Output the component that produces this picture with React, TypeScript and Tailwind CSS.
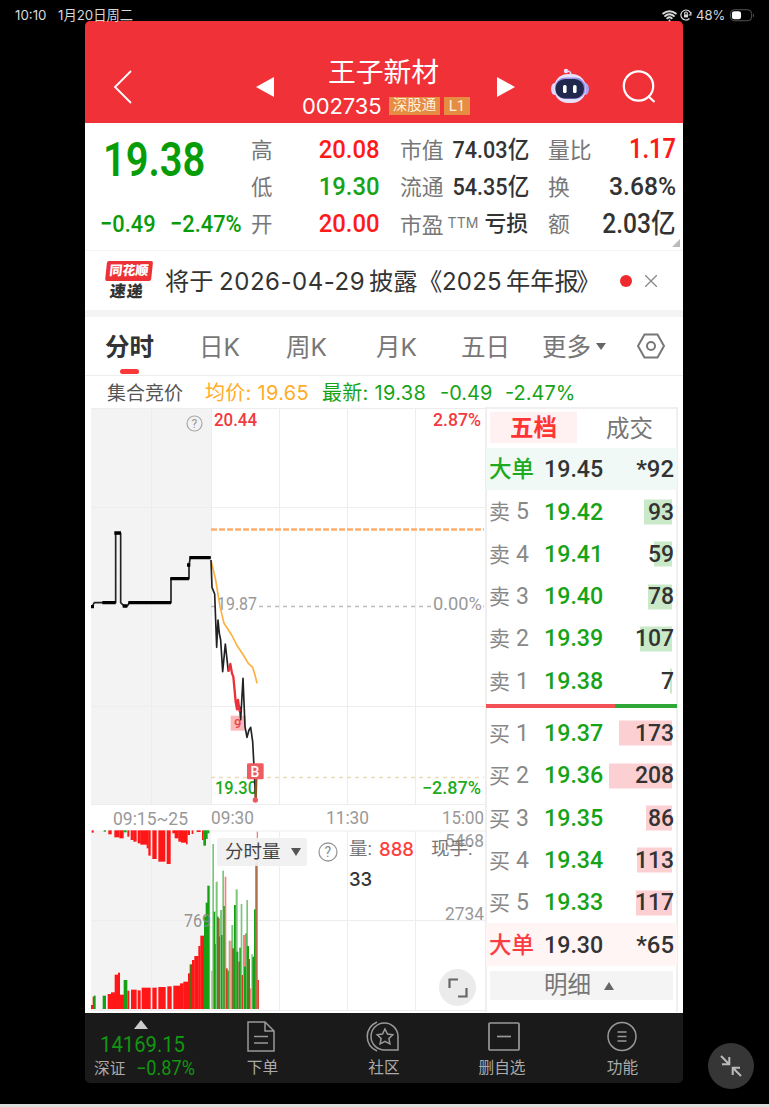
import { Wifi } from "lucide-react";

const stats = [
  { label: "高", value: "20.08", color: "text-[#ff1a1a]" },
  { label: "低", value: "19.30", color: "text-[#17a317]" },
  { label: "开", value: "20.00", color: "text-[#ff1a1a]" },
];

const asks = [
  { label: "5", price: "19.42", volume: "93", bar: 28 },
  { label: "4", price: "19.41", volume: "59", bar: 18 },
  { label: "3", price: "19.40", volume: "78", bar: 24 },
  { label: "2", price: "19.39", volume: "107", bar: 32 },
  { label: "1", price: "19.38", volume: "7", bar: 2 },
];

const bids = [
  { label: "1", price: "19.37", volume: "173", bar: 53 },
  { label: "2", price: "19.36", volume: "208", bar: 63 },
  { label: "3", price: "19.35", volume: "86", bar: 26 },
  { label: "4", price: "19.34", volume: "113", bar: 35 },
  { label: "5", price: "19.33", volume: "117", bar: 36 },
];

const RED = "#ff1717";
const GREEN = "#16a016";
const LIGHT_GREEN = "#7cc67c";
const LIGHT_RED = "#f98080";
const BROWN = "#8a6a30";

type Bar = [number, number, number, string];

// x start, x end, height edge, color (thirds of a pixel)
const auctionBars: Bar[] = [
  [18, 25, 555, RED], [23, 27, 530, RED], [26, 32, 527, GREEN], [53, 63, 527, GREEN],
  [68, 79, 522, RED], [78, 91, 517, RED], [89, 99, 464, RED], [99, 105, 458, RED],
  [104, 117, 524, RED], [116, 127, 480, GREEN], [127, 133, 512, RED], [138, 155, 509, RED],
  [158, 167, 511, RED], [170, 197, 503, RED], [202, 215, 503, RED], [220, 242, 501, RED],
  [247, 260, 499, RED], [265, 286, 497, RED], [285, 296, 490, RED], [295, 311, 485, RED],
  [309, 316, 460, RED], [314, 322, 433, "#5c6a10"], [321, 329, 420, RED], [328, 341, 408, RED],
  [340, 347, 378, RED], [346, 359, 347, RED], [357, 363, 290, GREEN], [362, 369, 248, GREEN],
  [367, 374, 197, GREEN],
];

const auctionTopBars: Bar[] = [
  [20, 26, 38, RED], [56, 63, 35, GREEN], [70, 80, 43, RED], [88, 103, 52, RED],
  [103, 116, 55, RED], [116, 125, 37, GREEN], [127, 133, 50, RED], [137, 146, 60, RED],
  [145, 155, 65, RED], [158, 167, 70, RED], [166, 186, 74, RED], [185, 191, 85, RED],
  [190, 197, 107, RED], [202, 215, 117, RED], [220, 241, 125, RED], [245, 257, 132, RED],
  [262, 270, 40, RED], [269, 281, 55, RED], [280, 289, 65, RED], [288, 304, 68, RED],
  [303, 308, 73, RED], [308, 315, 45, RED], [320, 325, 42, RED], [335, 347, 36, RED],
  [351, 356, 60, RED], [355, 363, 77, GREEN], [362, 368, 57, GREEN], [367, 373, 40, GREEN],
];

const volumeBars: Bar[] = [
  [379, 383, 452, LIGHT_RED], [382, 387, 72, LIGHT_GREEN], [386, 391, 275, GREEN],
  [389, 394, 372, GREEN], [392, 398, 185, LIGHT_GREEN], [396, 401, 290, GREEN],
  [399, 404, 295, BROWN], [402, 408, 350, GREEN], [405, 411, 270, LIGHT_GREEN],
  [408, 414, 345, GREEN], [412, 417, 152, LIGHT_GREEN], [415, 420, 258, GREEN],
  [419, 424, 170, LIGHT_RED], [423, 428, 445, "#d33b25"], [427, 432, 452, GREEN],
  [431, 436, 362, LIGHT_GREEN], [436, 441, 362, LIGHT_RED], [439, 445, 315, LIGHT_GREEN],
  [441, 449, 385, BROWN], [447, 453, 255, GREEN], [452, 458, 208, LIGHT_GREEN],
  [454, 460, 395, GREEN], [460, 465, 425, BROWN], [463, 468, 383, GREEN],
  [467, 472, 252, LIGHT_GREEN], [470, 475, 465, "#d33b25"], [474, 480, 345, LIGHT_RED],
  [477, 483, 440, GREEN], [481, 486, 340, GREEN], [484, 489, 240, LIGHT_GREEN],
  [486, 492, 378, GREEN], [491, 495, 417, "#d33b25"], [495, 499, 505, LIGHT_RED],
  [499, 503, 402, LIGHT_GREEN], [502, 508, 410, GREEN], [507, 512, 268, GREEN],
  [511, 517, 130, BROWN], [515, 519, 35, LIGHT_RED], [517, 522, 480, "#ee3a35"],
];

function Bars({ data }: { data: Bar[] }) {
  return (
    <>
      {data.map(([x1, x2, top, color], i) => (
        <rect key={i} x={x1} y={top} width={x2 - x1} height={567 - top} fill={color} />
      ))}
    </>
  );
}

function StatusBar() {
  return (
    <div className="flex h-[21px] justify-between pt-[5px] pr-[14px] pl-[15px] font-[Inter,'Noto_Sans_CJK_SC',sans-serif] text-[#d8d8d8]">
      <div className="flex h-5 items-center gap-[10px] text-[13.3px] leading-5 whitespace-nowrap">
        <span className="w-[33px]">10:10</span>
        <span>1月20日周二</span>
      </div>
      <div className="flex h-5 items-center text-[13px]">
        <Wifi className="h-[15px] w-[15px]" strokeWidth={3.2} />
        <svg className="ml-[3px] h-3 w-3" viewBox="0 0 12 12" fill="none" stroke="currentColor" strokeWidth="1.2">
          <path d="M9.5 9.5A5 5 0 1 1 10.8 5M10.9 3v3H8.6" />
          <path d="M4.7 5.5V4.3a1.3 1.3 0 0 1 2.6 0v1.2" />
          <rect x="4" y="5.4" width="4" height="3" fill="currentColor" stroke="none" />
        </svg>
        <span className="ml-1 w-[29px] pt-[1px]">48%</span>
        <svg className="ml-[5px] h-[13px] w-[25px]" viewBox="0 0 26 13">
          <rect x="0.5" y="0.5" width="22" height="11.5" rx="4" fill="none" stroke="#555" />
          <rect x="2" y="2" width="9.5" height="8.5" rx="2.5" fill="#fff" />
          <path d="M24 4.5a2.2 2.2 0 0 1 0 3.8z" fill="#555" />
        </svg>
      </div>
    </div>
  );
}

function Robot() {
  return (
    <svg className="h-9 w-10" viewBox="0 0 40 36">
      <circle cx="16" cy="3" r="2.2" fill="#e8dfff" />
      <path d="M17 3q4 0 4 4" stroke="#d9ccf6" strokeWidth="1.6" fill="none" />
      <ellipse cx="4.5" cy="21" rx="3.5" ry="6" fill="#dcd4fa" />
      <ellipse cx="35.5" cy="21" rx="3.5" ry="6" fill="#aaa3ec" />
      <rect x="4" y="6" width="32" height="29" rx="14" fill="#e6e0fb" />
      <rect x="5" y="9.5" width="30.5" height="21.5" rx="10" fill="#9c8ee5" />
      <rect x="5.5" y="11" width="28.5" height="19.5" rx="9.5" fill="#20294b" />
      <rect x="13" y="17" width="3.6" height="8" rx="1.6" fill="#fff" />
      <rect x="23" y="17" width="3.6" height="8" rx="1.6" fill="#fff" />
    </svg>
  );
}

function Header() {
  return (
    <header className="flex h-[102px] rounded-t-[5px] bg-[#f03138] pt-[34px] text-white">
      <svg className="mt-[14px] ml-[28px] h-9 w-5" viewBox="0 0 20 36" fill="none" stroke="#fff" strokeWidth="1.8">
        <path d="M18 2 2 18l16 16" />
      </svg>
      <svg className="mt-[22px] ml-[123px] h-5 w-[18px]" viewBox="0 0 18 20">
        <path d="M0 10 18 0v20z" fill="#fff" />
      </svg>
      <div className="ml-[24px] flex w-[171px] flex-col items-center">
        <div className="h-[34px] text-[27.8px] leading-[35px]">王子新材</div>
        <div className="ml-[4px] flex h-[33px] items-center gap-[7px] self-start">
          <span className="w-[80px] font-[Inter] text-[22px] leading-none tracking-[-0.1px]">002735</span>
          <div className="flex gap-1 text-[15px] leading-[18px] text-[#fff0dc]">
            <span className="h-[18px] w-[51px] bg-[#e58d43] text-center text-[14.5px] whitespace-nowrap">深股通</span>
            <span className="h-[18px] w-[26px] bg-[#e58d43] text-center">L1</span>
          </div>
        </div>
      </div>
      <svg className="mt-[22px] ml-[28px] h-5 w-[18px]" viewBox="0 0 18 20">
        <path d="M18 10 0 0v20z" fill="#fff" />
      </svg>
      <div className="mt-[13px] ml-[35px]">
        <Robot />
      </div>
      <svg className="mt-[15px] ml-[32px] h-[34px] w-[34px]" viewBox="0 0 34 34" fill="none" stroke="#fff" strokeWidth="2.2">
        <circle cx="16.5" cy="16" r="14.7" />
        <path d="m26 26 6.5 6" />
      </svg>
    </header>
  );
}

function Quote() {
  return (
    <section className="relative flex h-[128px] border-b border-[#f4f4f4] pt-2 whitespace-nowrap">
      <div className="ml-[15px] w-[151px] text-[#089c08]">
        <div className="mt-[4px] ml-[3px] h-[50px] origin-left scale-x-[.83] text-[48px] leading-[50px] font-semibold">19.38</div>
        <div className="mt-[20px] flex h-[37px] w-[161px] origin-left scale-x-[.88] justify-between text-[24.8px] leading-[37px] font-medium">
          <span>−0.49</span>
          <span>−2.47%</span>
        </div>
      </div>
      <div className="w-[129px]">
        {stats.map((s) => (
          <div key={s.label} className="flex h-[37px] items-center justify-between">
            <span className="pt-[4px] text-[21.5px] text-[#777]">{s.label}</span>
            <span className={"origin-right scale-x-[.9] text-[26.5px] leading-none font-medium " + s.color}>{s.value}</span>
          </div>
        ))}
      </div>
      <div className="ml-5 w-[128px] text-[21.8px] text-[#777]">
        <div className="flex h-[37px] items-center justify-between">
          <span className="pt-[4px]">市值</span>
          <span className="origin-right scale-x-[.9] text-[24px] font-medium text-[#333]">74.03亿</span>
        </div>
        <div className="flex h-[37px] items-center justify-between">
          <span className="pt-[4px]">流通</span>
          <span className="origin-right scale-x-[.9] text-[24px] font-medium text-[#333]">54.35亿</span>
        </div>
        <div className="flex h-[37px] items-center justify-between">
          <span className="flex items-start pt-[4px] leading-8">
            市盈<span className="ml-1 font-[Inter] text-[14px] leading-[26px]">TTM</span>
          </span>
          <span className="pt-[2px] font-medium text-[#333]">亏损</span>
        </div>
      </div>
      <div className="ml-5 w-[128px] text-[21.8px] text-[#777]">
        <div className="flex h-[37px] items-center justify-between">
          <span className="pt-[4px]">量比</span>
          <span className="origin-right scale-x-[.87] text-[27px] leading-none font-semibold text-[#ff1a1a]">1.17</span>
        </div>
        <div className="flex h-[37px] items-center justify-between">
          <span className="pt-[4px]">换</span>
          <span className="origin-right scale-x-[.93] text-[26.5px] leading-none font-medium text-[#333]">3.68%</span>
        </div>
        <div className="flex h-[37px] items-center justify-between">
          <span className="pt-[4px]">额</span>
          <span className="origin-right scale-x-[.91] pt-[2px] text-[27px] leading-none font-medium text-[#333]">2.03亿</span>
        </div>
      </div>
      <svg className="absolute right-[3px] bottom-[3px] h-2 w-2" viewBox="0 0 8 8">
        <path d="M8 0v8H0z" fill="#bbb" />
      </svg>
    </section>
  );
}

function Notice() {
  return (
    <section className="flex h-[60px] items-center border-b border-[#f4f4f4] text-[#333]">
      <div className="mt-[1px] ml-[20px] w-[46px] -skew-x-6 text-center font-black">
        <div className="h-[20px] rounded-[2px] bg-[#ee3037] text-[13px] leading-[19px] text-white">同花顺</div>
        <div className="h-[20px] text-[16px] leading-[21px] tracking-[1px]">速递</div>
      </div>
      <div className="mt-[3px] ml-[14px] flex w-[441px] items-center text-[24.3px] leading-9 whitespace-nowrap">
        <span className="w-[49px]">将于</span>
        <span className="ml-[5px] w-[147px] font-[Inter] text-[24px] tracking-[0.55px]">2026-04-29</span>
        <span className="ml-[3px] w-[49px]">披露</span>
        <span className="w-[24px]">《</span>
        <span className="w-[61px] font-[Inter] text-[24px] tracking-[0.2px]">2025</span>
        <span className="ml-[3px]">年年报</span>
        <span className="-ml-[3px]">》</span>
      </div>
      <span className="ml-[14px] h-3 w-3 rounded-full bg-[#ee2a2e]" />
      <svg className="ml-[13px] h-3 w-3" viewBox="0 0 12 12" stroke="#888" strokeWidth="1.3">
        <path d="m0 0 12 12M12 0 0 12" />
      </svg>
    </section>
  );
}

function Tabs() {
  return (
    <nav className="flex h-[59px] items-center border-b border-[#eee] font-[Inter,'Noto_Sans_CJK_SC',sans-serif] text-[24.5px] leading-[58px] whitespace-nowrap text-[#777]">
      <div className="relative ml-[20px] h-[58px] w-[50px] pt-[1px] font-bold text-[#333]">
        分时
        <span className="absolute bottom-[1px] left-[15px] h-[5px] w-[19px] rounded-full bg-[#fa3838]" />
      </div>
      <span className="ml-[44px] w-[43px] pt-[2px]">日K</span>
      <span className="ml-[44px] w-[43px] pt-[2px]">周K</span>
      <span className="ml-[47px] w-[43px] pt-[2px]">月K</span>
      <span className="ml-[42px] w-[49px] pt-[2px]">五日</span>
      <span className="ml-[32px] w-[50px] pt-[2px]">更多</span>
      <svg className="ml-[4px] h-[7px] w-[10px]" viewBox="0 0 10 7">
        <path d="M0 0h10L5 7z" fill="#666" />
      </svg>
      <svg className="ml-[31px] h-[26px] w-[28px]" viewBox="0 0 28 26" fill="none" stroke="#777" strokeWidth="2">
        <path d="M7.5 1.5h13L27 13l-6.5 11.5h-13L1 13z" />
        <circle cx="14" cy="13" r="4" />
      </svg>
    </nav>
  );
}

function Summary() {
  return (
    <div className="flex h-[31px] items-center pt-[3px] font-[Inter,'Noto_Sans_CJK_SC',sans-serif] text-[20px] leading-[28px] whitespace-nowrap text-[#17a317]">
      <span className="ml-[22px] w-[78px] pt-[1px] text-[19px] text-[#555]">集合竞价</span>
      <span className="ml-[20px] w-[106px] tracking-[0.3px] text-[#ffac27]">均价: 19.65</span>
      <span className="ml-[11px] w-[106px] tracking-[0.3px]">最新: 19.38</span>
      <span className="ml-[12px] w-[53px]">-0.49</span>
      <span className="ml-[12px]">-2.47%</span>
    </div>
  );
}

function Chart() {
  return (
    <div className="relative h-[605px] w-[400px]">
      <svg className="block h-[605px] w-[400px] overflow-visible" viewBox="85 407 400 605" fontFamily="Roboto, 'Noto Sans CJK SC', sans-serif">
        <path d="M91 408h120v396H91zM91 831h120v179H91z" fill="#f3f3f3" />
        <path
          d="M91 408.5h394M91 507.5h394M91 706.5h394M91 804.5h394M91 831h394M91 920.5h394M91 1010.5h394M151.5 408v396M279.5 408v396M347.5 408v396M415.5 408v396M211.5 408v396M151.5 831v179M279.5 831v179M347.5 831v179M415.5 831v179"
          stroke="#ededed"
          fill="none"
        />
        <path d="M211 529.5h273" stroke="#ffae70" strokeWidth="2.5" strokeDasharray="6 2" />
        <path d="M211 606.5h273" stroke="#bbb" strokeWidth="1.4" strokeDasharray="4 4" />
        <path d="M211 777.5h273" stroke="#eedcb8" strokeWidth="1.4" strokeDasharray="4 4" />
        <rect x="218" y="596" width="39" height="14" fill="#fff" />
        <rect x="433" y="600" width="48" height="10" fill="#fff" />

        <g fontSize="18" fontWeight="500">
          <text x="214" y="426" textLength="43" lengthAdjust="spacingAndGlyphs" fill="#f23a40">20.44</text>
          <text x="433" y="426" textLength="48" lengthAdjust="spacingAndGlyphs" fill="#f23a40">2.87%</text>
          <text x="217" y="609.5" textLength="40" lengthAdjust="spacingAndGlyphs" fill="#999" fontWeight="400">19.87</text>
          <text x="433" y="609.5" textLength="49" lengthAdjust="spacingAndGlyphs" fill="#999" fontWeight="400">0.00%</text>
          <text x="215" y="793.5" textLength="42" lengthAdjust="spacingAndGlyphs" fill="#1daa1d">19.30</text>
          <text x="422" y="793.5" textLength="59" lengthAdjust="spacingAndGlyphs" fill="#1daa1d">−2.87%</text>
        </g>
        <g fontSize="18.5" fill="#999">
          <text x="113" y="825" textLength="75" lengthAdjust="spacingAndGlyphs">09:15~25</text>
          <text x="211" y="824" textLength="43" lengthAdjust="spacingAndGlyphs">09:30</text>
          <text x="326" y="824" textLength="43" lengthAdjust="spacingAndGlyphs">11:30</text>
          <text x="442" y="824" textLength="42" lengthAdjust="spacingAndGlyphs">15:00</text>
          <text x="445" y="846.5" textLength="39" lengthAdjust="spacingAndGlyphs">5468</text>
          <text x="445" y="919.5" textLength="39" lengthAdjust="spacingAndGlyphs">2734</text>
        </g>

        <circle cx="194.5" cy="423.5" r="7.5" fill="none" stroke="#aaa" strokeWidth="1.2" />
        <text x="191.5" y="428" fontSize="12" fill="#999">?</text>

        {/* price line */}
        <g transform="translate(85 500) scale(0.33333)" fill="none" strokeLinejoin="round">
          <path d="M20 322l8-14h64V100h15v208l10 10h10l6-10h125v-72h54v-41l4-22h61" stroke="#222" strokeWidth="5" />
          <path d="M18 320h9M52 308h40M88 99h20M113 318h14M130 308h128M256 236h56M306 195h10M313 173h64" stroke="#000" strokeWidth="10" />
          <path d="M379 185l13 55 13 80 12 50 23 35 15 30 20 30 15 25 13 12 7 23 6 25" stroke="#fcb040" strokeWidth="5" />
          <path d="M378 180l3 82 8 20 6 160 4-82 4 40 4 20 6 95 8-83 9 83" stroke="#222" strokeWidth="5" />
          <rect x="437" y="647" width="45" height="45" fill="#f99b9b" opacity="0.7" stroke="none" />
          <path d="M464 620l3 40 7-125 6 145 6 32 6-22 5-8 6 43 4 75 5 100" stroke="#222" strokeWidth="5" />
          <path d="M430 515l6-23 5 28 4 10 7 75 4 23 3-28 5 35" stroke="#ea3038" strokeWidth="7" />
          <path d="M514 835l-2 62" stroke="#8c5620" strokeWidth="7" />
          <rect x="486" y="790" width="50" height="48" rx="4" fill="#ee5c61" />
          <circle cx="511" cy="900" r="8" fill="#f0575c" />
        </g>
        <text x="250.5" y="777" fontSize="14" fontWeight="500" fill="#fff">B</text>
        <text x="234" y="728" fontSize="13" fontWeight="500" fill="#ea4248">9</text>

        {/* volume */}
        <g transform="translate(85 820) scale(0.33333)">
          <Bars data={auctionBars} />
          <Bars data={volumeBars} />
          {auctionTopBars.map(([x1, x2, bottom, color], i) => (
            <rect key={i} x={x1} y={31} width={x2 - x1} height={bottom - 31} fill={color} />
          ))}
        </g>
        <text x="184" y="927" fontSize="17.5" fill="#888" fillOpacity="0.9" textLength="27" lengthAdjust="spacingAndGlyphs">769</text>
      </svg>

      <div className="absolute top-[431px] left-[132px] flex items-start text-[18.5px] leading-[28px] whitespace-nowrap text-[#777]">
        <div className="flex h-[28px] w-[90px] items-center rounded-[2px] bg-[#f0f0f0]/90 pl-[8px] text-[#444]">
          <span className="w-[57px]">分时量</span>
          <svg className="ml-[9px] h-[8px] w-[10px]" viewBox="0 0 10 8">
            <path d="M0 0h10L5 8z" fill="#555" />
          </svg>
        </div>
        <svg className="mt-[4px] ml-[11px] h-5 w-5" viewBox="0 0 20 20">
          <circle cx="10" cy="10" r="9" fill="none" stroke="#999" strokeWidth="1.3" />
          <text x="6.5" y="15" fontSize="14" fill="#888">?</text>
        </svg>
        <div className="-mt-[3px] ml-[11px] flex flex-col">
          <div className="flex h-[28px]">
            <span>量:</span>
            <span className="ml-[7px] w-[35px] font-[Inter] text-[18.5px] font-medium text-[#ff3f3f]">888</span>
            <span className="ml-[17px]">现手:</span>
          </div>
          <span className="mt-[2px] font-[Inter] text-[18.5px] font-medium text-[#333]">33</span>
        </div>
      </div>
      <div className="absolute top-[562px] left-[354px] flex h-[37px] w-[37px] items-center justify-center rounded-full bg-[#ebebeb]">
        <svg className="h-[20px] w-[20px]" viewBox="0 0 20 20" fill="none" stroke="#666" strokeWidth="2.2">
          <path d="M1.5 10V1.5H10M18.5 10v8.5H10" />
        </svg>
      </div>
    </div>
  );
}

function BookRow({ side, row }: { side: string; row: (typeof asks)[number] }) {
  return (
    <div className="flex h-[42.3px] items-center pt-[1px] pr-[3px] pl-[3px]">
      <span className="pt-[2px] text-[21px] text-[#888]">{side}</span>
      <span className="ml-[6px] w-[28px] text-[23px] text-[#888]">{row.label}</span>
      <span className="w-[61px] origin-left scale-x-[.94] text-[24.7px] font-medium text-[#17a317]">{row.price}</span>
      <div className="relative flex flex-1 justify-end">
        <span
          className={"absolute top-1/2 right-[2px] h-[25px] -translate-y-1/2 " + (side === "卖" ? "bg-[#c9e9c9]" : "bg-[#fcd0d2]")}
          style={{ width: row.bar }}
        />
        <span className="relative origin-right scale-x-[.93] text-[24.7px] font-medium text-[#333]">{row.volume}</span>
      </div>
    </div>
  );
}

function BigOrder({ price, volume, tone }: { price: string; volume: string; tone: string }) {
  return (
    <div className={"flex h-[42.3px] items-center pt-[1px] pr-[3px] pl-[3px] font-medium " + tone}>
      <span className="w-[55px] text-[22.5px]">大单</span>
      <span className="w-[61px] origin-left scale-x-[.94] text-[24.7px] text-[#333]">{price}</span>
      <span className="flex-1 origin-right scale-x-[.97] text-right text-[24.7px] text-[#333]">{volume}</span>
    </div>
  );
}

function OrderBook() {
  return (
    <div className="relative h-[605px] w-[193px] border-x-2 border-t-2 border-[#efefef] leading-none">
      <div className="flex h-[39px] items-start pt-[3px] text-[23.5px]">
        <div className="ml-[3px] flex h-[31px] w-[87px] items-center justify-center bg-[#fff1f1] pt-[3px] font-bold text-[#ff3535]">五档</div>
        <div className="ml-[29px] flex h-[31px] items-center pt-[4px] text-[#777]">成交</div>
      </div>
      <div className="-mr-[1px] -ml-[1px]">
        <BigOrder price="19.45" volume="*92" tone="bg-[#f0f9f5] text-[#1daa1d]" />
        {asks.map((row) => (
          <BookRow key={row.label} side="卖" row={row} />
        ))}
        <div className="mt-[2px] mb-[4px] flex h-[4px]">
          <span className="w-[129px] bg-[#f25255]" />
          <span className="flex-1 bg-[#2fa837]" />
        </div>
        {bids.map((row) => (
          <BookRow key={row.label} side="买" row={row} />
        ))}
        <BigOrder price="19.30" volume="*65" tone="bg-[#fff5f5] text-[#fa3d42]" />
      </div>
      <div className="mx-[3px] mt-[5px] flex h-[29px] items-center bg-[#f4f4f4] pt-[1px] pl-[54px] text-[23.5px] text-[#777]">
        明细
        <svg className="ml-[13px] h-[8px] w-[10px]" viewBox="0 0 10 8">
          <path d="M0 8h10L5 0z" fill="#666" />
        </svg>
      </div>
    </div>
  );
}

function BottomBar() {
  return (
    <footer className="flex h-[70px] rounded-b-[5px] bg-[#1a1a1a] text-[15.7px] leading-5 whitespace-nowrap text-[#aaa]">
      <div className="flex w-[117px] flex-col items-start">
        <svg className="mt-[7px] ml-[49px] h-[9px] w-[14px]" viewBox="0 0 14 9">
          <path d="M0 9h14L7 0z" fill="#ccc" />
        </svg>
        <div className="mt-[3px] ml-[15px] h-[24px] w-[87px] origin-left scale-x-[.9] text-[22.5px] leading-[24px] text-[#129512]">14169.15</div>
        <div className="mt-[2px] flex h-[22px] items-center">
          <span className="ml-[9px]">深证</span>
          <span className="ml-[11px] origin-left scale-x-[.94] text-[19.3px] text-[#129512]">−0.87%</span>
        </div>
      </div>
      <div className="flex w-[120px] flex-col items-center pt-[8px]">
        <svg className="mr-[2px] h-[31px] w-[30px]" viewBox="0 0 30 31" fill="none" stroke="#999" strokeWidth="1.5">
          <path d="M2 1h17l9 9v20H2zM19 1v9h9M8 15.5h14M8 22h14" />
        </svg>
        <span className="mt-[6px] ml-[1px]">下单</span>
      </div>
      <div className="flex w-[124px] flex-col items-center pt-[8px]">
        <svg className="mr-[2px] h-[31px] w-[34px]" viewBox="0 0 34 31" fill="none" stroke="#999" strokeWidth="1.5">
          <path d="M11 1C-2 7-2 24 11 30" />
          <path d="M32 29H19a13.5 13.5 0 1 1 13-14z" />
          <path d="m19 8 2.5 5 5.3.8-3.9 3.7 1 5.4-4.9-2.6-4.9 2.6 1-5.4-3.9-3.7 5.3-.8z" />
        </svg>
        <span className="mt-[6px]">社区</span>
      </div>
      <div className="flex w-[115px] flex-col items-center pt-[9px]">
        <svg className="h-[30px] w-[32px]" viewBox="0 0 32 30" fill="none" stroke="#999" strokeWidth="1.7">
          <rect x="1" y="1" width="30" height="27" rx="1" />
          <path d="M9 14.5h14" />
        </svg>
        <span className="mt-[6px] mr-[3px]">删自选</span>
      </div>
      <div className="flex w-[122px] flex-col items-center pt-[8px]">
        <svg className="h-[31px] w-[30px]" viewBox="0 0 30 31" fill="none" stroke="#999" strokeWidth="1.5">
          <circle cx="15" cy="15.5" r="14" />
          <path d="M10.5 11h9M10.5 15.5h9M10.5 20h9" />
        </svg>
        <span className="mt-[6px] ml-[1px]">功能</span>
      </div>
    </footer>
  );
}

export default function App() {
  return (
    <div className="relative h-[1107px] w-[769px] overflow-hidden border-b-[3px] border-[#dedede] bg-black font-[Roboto,'Noto_Sans_CJK_SC',sans-serif]">
      <StatusBar />
      <main className="ml-[85px] w-[598px]">
        <Header />
        <div className="h-[890px] bg-white">
          <Quote />
          <Notice />
          <div className="h-[6px] bg-[#f4f4f4]" />
          <Tabs />
          <Summary />
          <div className="flex">
            <Chart />
            <OrderBook />
          </div>
        </div>
        <BottomBar />
      </main>
      <button className="absolute top-[1043px] left-[708px] flex h-[46px] w-[46px] items-center justify-center rounded-full bg-[#363636]">
        <svg className="h-[22px] w-[22px]" viewBox="0 0 22 22" fill="none" stroke="#bbb" strokeWidth="2">
          <path d="m1 1 8 8M9.3 2v7.3H2M21 21l-8-8M12.7 20v-7.3H20" />
        </svg>
      </button>
    </div>
  );
}
